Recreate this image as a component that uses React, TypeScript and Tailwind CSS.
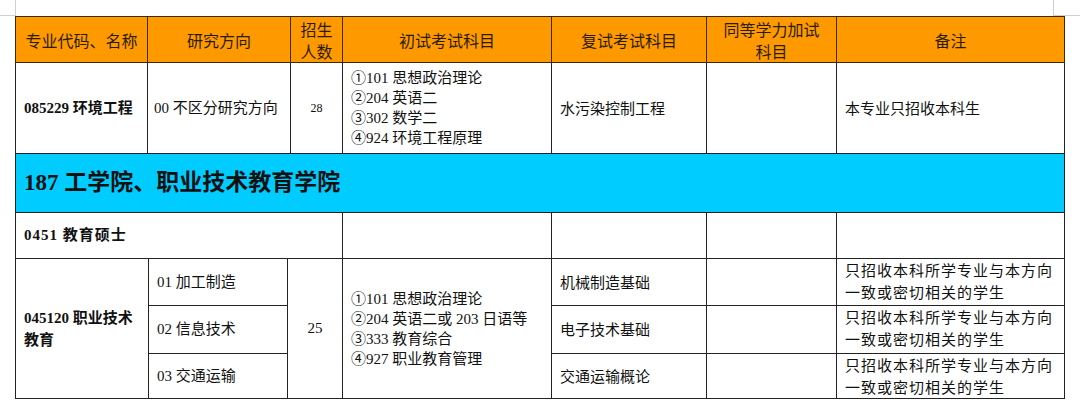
import React from "react";

const serif = "font-['Liberation_Serif','Noto_Sans_CJK_SC',sans-serif]";
const sans = "font-['Noto_Sans_CJK_SC',sans-serif]";

const cell = "border border-[#222] align-middle text-[#111]";
const head = "border border-[#3a2a00] bg-[#ff9900] text-center text-[16px] leading-[22px] text-[#2a1d00] font-normal";

const majors = [
  { dir: "01 加工制造", retest: "机械制造基础", h: "h-[47px]" },
  { dir: "02 信息技术", retest: "电子技术基础", h: "h-[48px]" },
  { dir: "03 交通运输", retest: "交通运输概论", h: "h-[45px]" },
];

const Remark = () => (
  <div className={`${sans} text-[15px] leading-[22px] tracking-[1px]`}>
    只招收本科所学专业与本方向
    <br />
    一致或密切相关的学生
  </div>
);

export default function App() {
  return (
    <div className="w-[1080px] h-[416px] bg-white overflow-hidden">
      {/* page margin marks */}
      <div className="flex justify-between h-[16px]">
        <div className="w-[16px] h-[16px] border-r border-b border-[#cfcfcf]" />
        <div className="w-[27px] h-[16px] border-l border-b border-[#cfcfcf]" />
      </div>

      <div className="pl-[15px]">
        <table className={`table-fixed border-collapse w-[1049px] ${serif}`}>
          <colgroup>
            <col className="w-[132px]" />
            <col className="w-[143px]" />
            <col className="w-[52px]" />
            <col className="w-[209px]" />
            <col className="w-[155px]" />
            <col className="w-[130px]" />
            <col className="w-[228px]" />
          </colgroup>
          <tbody>
            <tr className="h-[46px]">
              <th className={`${head} ${sans}`}>专业代码、名称</th>
              <th className={`${head} ${sans}`}>研究方向</th>
              <th className={`${head} ${sans}`}>
                招生
                <br />
                人数
              </th>
              <th className={`${head} ${sans}`}>初试考试科目</th>
              <th className={`${head} ${sans}`}>复试考试科目</th>
              <th className={`${head} ${sans}`}>
                同等学力加试
                <br />
                科目
              </th>
              <th className={`${head} ${sans}`}>备注</th>
            </tr>

            <tr className="h-[91px]">
              <td className={`${cell} px-2 text-[15px] font-bold`}>085229 环境工程</td>
              <td className={`${cell} px-[6px] text-[15px]`}>00 不区分研究方向</td>
              <td className={`${cell} text-center text-[12px]`}>28</td>
              <td className={`${cell} px-2 text-[15px] leading-[20px]`}>
                ①101 思想政治理论
                <br />
                ②204 英语二
                <br />
                ③302 数学二
                <br />
                ④924 环境工程原理
              </td>
              <td className={`${cell} px-2 text-[15px] ${sans}`}>水污染控制工程</td>
              <td className={cell} />
              <td className={`${cell} px-2 text-[15px] ${sans}`}>本专业只招收本科生</td>
            </tr>

            <tr className="h-[59px]">
              <td colSpan={7} className={`${cell} bg-[#00ccff] px-2 text-[23px] font-bold`}>
                187 工学院、职业技术教育学院
              </td>
            </tr>

            <tr className="h-[46px]">
              <td colSpan={3} className={`${cell} px-2 text-[15px] tracking-[1px] font-bold`}>
                0451 教育硕士
              </td>
              <td className={cell} />
              <td className={cell} />
              <td className={cell} />
              <td className={cell} />
            </tr>
          </tbody>
        </table>

        <table className={`table-fixed border-collapse w-[1049px] -mt-px ${serif}`}>
          <colgroup>
            <col className="w-[133px]" />
            <col className="w-[139px]" />
            <col className="w-[55px]" />
            <col className="w-[209px]" />
            <col className="w-[155px]" />
            <col className="w-[130px]" />
            <col className="w-[228px]" />
          </colgroup>
          <tbody>
            {majors.map((m, i) => (
              <tr key={m.dir} className={m.h}>
                {i === 0 && (
                  <td rowSpan={3} className={`${cell} px-2 text-[15px] leading-[22px] font-bold`}>
                    045120 职业技术
                    <br />
                    教育
                  </td>
                )}
                <td className={`${cell} px-2 text-[15px]`}>{m.dir}</td>
                {i === 0 && (
                  <td rowSpan={3} className={`${cell} text-center text-[15px]`}>
                    25
                  </td>
                )}
                {i === 0 && (
                  <td rowSpan={3} className={`${cell} px-2 text-[15px] leading-[20px]`}>
                    ①101 思想政治理论
                    <br />
                    ②204 英语二或 203 日语等
                    <br />
                    ③333 教育综合
                    <br />
                    ④927 职业教育管理
                  </td>
                )}
                <td className={`${cell} px-2 text-[15px] ${sans}`}>{m.retest}</td>
                <td className={cell} />
                <td className={`${cell} px-2 align-top`}>
                  <Remark />
                </td>
              </tr>
            ))}
          </tbody>
        </table>
      </div>
    </div>
  );
}
